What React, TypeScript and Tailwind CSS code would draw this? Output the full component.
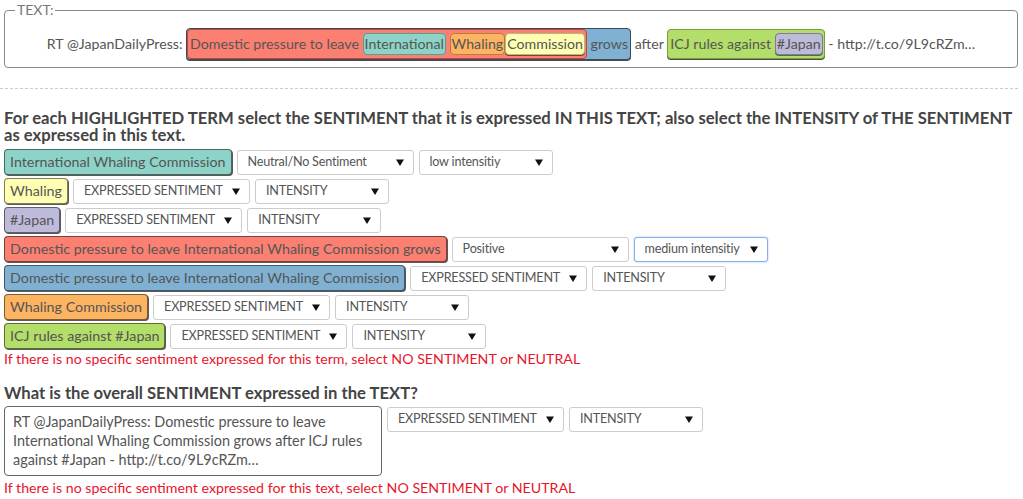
import React from "react";

const box = "border border-black/50 rounded-[4px] shadow-[1px_1px_0_rgba(0,0,0,0.65)]";

function Arrow() {
  return (
    <svg width="8" height="7" viewBox="0 0 8 7" className="shrink-0">
      <path d="M0 0.5h8L4 7z" fill="#111" />
    </svg>
  );
}

function Sel({ label, wide, focus }: { label: string; wide?: boolean; focus?: boolean }) {
  return (
    <div
      className={`shrink-0 flex items-center justify-between h-[25px] ${wide ? "w-[177px]" : "w-[134px]"} ${
        focus ? "border-[#86aef0] shadow-[0_0_2px_rgba(100,150,240,0.6)]" : "border-[#ccc]"
      } border rounded-[3px] bg-white pl-[10px] pr-[9px] text-[12.6px] tracking-[-0.2px] text-[#555]`}
    >
      <span className="whitespace-nowrap">{label}</span>
      <Arrow />
    </div>
  );
}

function Term({ label, color }: { label: string; color: string }) {
  return (
    <div className={`shrink-0 h-[26px] flex items-center px-[5px] text-[14.3px] text-[#555] whitespace-nowrap ${color} ${box}`}>
      {label}
    </div>
  );
}

const rows: { label: string; color: string; s: string; i: string; focus?: boolean }[] = [
  { label: "International Whaling Commission", color: "bg-[#8dd3c7]", s: "Neutral/No Sentiment", i: "low intensitiy" },
  { label: "Whaling", color: "bg-[#ffffb3]", s: "EXPRESSED SENTIMENT", i: "INTENSITY" },
  { label: "#Japan", color: "bg-[#bebada]", s: "EXPRESSED SENTIMENT", i: "INTENSITY" },
  { label: "Domestic pressure to leave International Whaling Commission grows", color: "bg-[#fb8072]", s: "Positive", i: "medium intensitiy", focus: true },
  { label: "Domestic pressure to leave International Whaling Commission", color: "bg-[#80b1d3]", s: "EXPRESSED SENTIMENT", i: "INTENSITY" },
  { label: "Whaling Commission", color: "bg-[#fdb462]", s: "EXPRESSED SENTIMENT", i: "INTENSITY" },
  { label: "ICJ rules against #Japan", color: "bg-[#b3de69]", s: "EXPRESSED SENTIMENT", i: "INTENSITY" },
];

const hl = "inline-block leading-[18px] border rounded-[4px] align-baseline";

export default function App() {
  return (
    <div className="w-[1023px] h-[499px] bg-white text-[#555] overflow-hidden" style={{ fontFamily: "Lato, 'Open Sans', sans-serif" }}>
      <fieldset className="ml-[4px] mr-[5px] border border-[#888] rounded-[4px] px-[10px] pt-[8px] pb-[9px] min-w-0">
        <legend className="px-[2px] text-[14px] leading-[20px] text-[#777]">TEXT:</legend>
        <div className="h-[30px] text-center text-[14.2px] leading-[30px] whitespace-nowrap">
          RT @JapanDailyPress:{" "}
          <span className={`${hl} bg-[#80b1d3] border-[#3a4a5a] shadow-[0_1px_0_rgba(0,0,0,0.7)] pr-[2px]`}>
            <span className={`${hl} bg-[#fb8072] border-[#c0453a] py-[3px] pl-[2px] pr-[1px]`}>
              Domestic pressure to leave{" "}
              <span className={`${hl} bg-[#8dd3c7] border-[#5c9d92] py-[1px] px-[1px]`}>International</span>{" "}
              <span className={`${hl} bg-[#fdb462] border-[#b87d38] py-[1px] px-[1px]`}>Whaling</span>
              <span className={`${hl} bg-[#ffffb3] border-[#b8b878] py-[1px] px-[1px] shadow-[0_1px_0_rgba(0,0,0,0.5)]`}>Commission</span>
            </span>{" "}
            grows
          </span>{" "}
          after{" "}
          <span className={`${hl} bg-[#b3de69] border-[#7a9f3a] shadow-[0_1px_0_rgba(0,0,0,0.7)] py-[3px] pl-[2px] pr-[1px]`}>
            ICJ rules against{" "}
            <span className={`${hl} bg-[#bebada] border-[#7e7a99] shadow-[0_1px_0_rgba(0,0,0,0.5)] py-[1px] px-[1px]`}>#Japan</span>
          </span>{" "}
          - http://t.co/9L9cRZm…
        </div>
      </fieldset>

      <div className="mt-[20px] mr-[5px] border-t border-dashed border-[#ccc]" />

      <h2 className="mt-[21px] ml-[4px] mr-[4px] text-[16.65px] leading-[17px] font-bold text-[#444]">
        For each HIGHLIGHTED TERM select the SENTIMENT that it is expressed IN THIS TEXT; also select the INTENSITY of THE SENTIMENT as expressed in this text.
      </h2>

      <div className="mt-[5px] ml-[4px] flex flex-col gap-[3px]">
        {rows.map((r, idx) => (
          <div key={idx} className="flex items-center gap-[5px] h-[26px]">
            <Term label={r.label} color={r.color} />
            <Sel label={r.s} wide />
            <Sel label={r.i} focus={r.focus} />
          </div>
        ))}
      </div>

      <div className="ml-[4px] mt-[1px] text-[14.2px] leading-[18px] text-[#e8162b]">
        If there is no specific sentiment expressed for this term, select NO SENTIMENT or NEUTRAL
      </div>

      <h2 className="mt-[17px] ml-[4px] text-[16.65px] leading-[17px] font-bold text-[#444]">
        What is the overall SENTIMENT expressed in the TEXT?
      </h2>

      <div className="mt-[4px] ml-[4px] flex items-start gap-[5px]">
        <div className="w-[378px] h-[70px] border border-[#666] rounded-[4px] pl-[8px] pr-[6px] pt-[5px] text-[14.4px] leading-[19px] text-[#555]">
          RT @JapanDailyPress: Domestic pressure to leave International Whaling Commission grows after ICJ rules against #Japan - http://t.co/9L9cRZm…
        </div>
        <div className="mt-[1px] flex gap-[5px]">
          <Sel label="EXPRESSED SENTIMENT" wide />
          <Sel label="INTENSITY" />
        </div>
      </div>

      <div className="ml-[4px] mt-[3px] text-[14.2px] leading-[18px] text-[#e8162b]">
        If there is no specific sentiment expressed for this text, select NO SENTIMENT or NEUTRAL
      </div>
    </div>
  );
}
